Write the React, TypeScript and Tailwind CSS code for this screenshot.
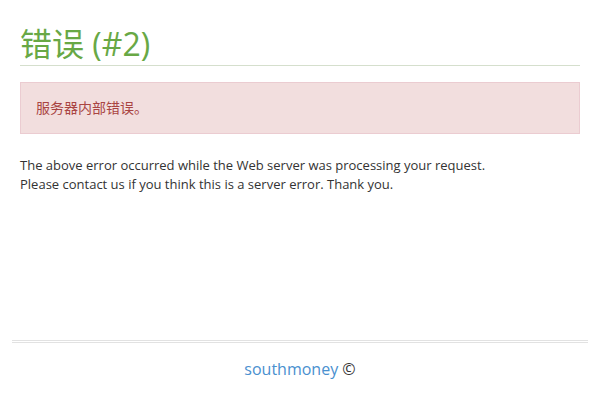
export default function App() {
    return (
        <div className="w-[600px] h-[400px] bg-white flex flex-col font-['Open_Sans','Noto_Sans_CJK_SC',sans-serif] text-[#333333]">
            <main className="flex-1 px-[20px]">
                <h1 className="mt-[24px] text-[32px] leading-[40px] font-normal text-[#68a845] border-b border-[#d5dfcd] pb-[1px]">
                    错误 (#2)
                </h1>
                <div className="mt-[16px] px-[15px] py-[15px] bg-[#f2dede] border border-[#ebccd1] text-[#a94442] text-[14px] leading-[20px]">
                    服务器内部错误。
                </div>
                <p className="mt-[22px] text-[13px] leading-[19px]">
                    The above error occurred while the Web server was processing your request.
                    <br />
                    Please contact us if you think this is a server error. Thank you.
                </p>
            </main>
            <footer className="mx-[12px] pb-[20px]">
                <div className="border-t border-b border-[#e2e2e2] h-[3px]" />
                <div className="pt-[15px] text-center text-[16px] leading-[22px]">
                    <a className="text-[#4a90cf]">southmoney</a> ©
                </div>
            </footer>
        </div>
    )
}
